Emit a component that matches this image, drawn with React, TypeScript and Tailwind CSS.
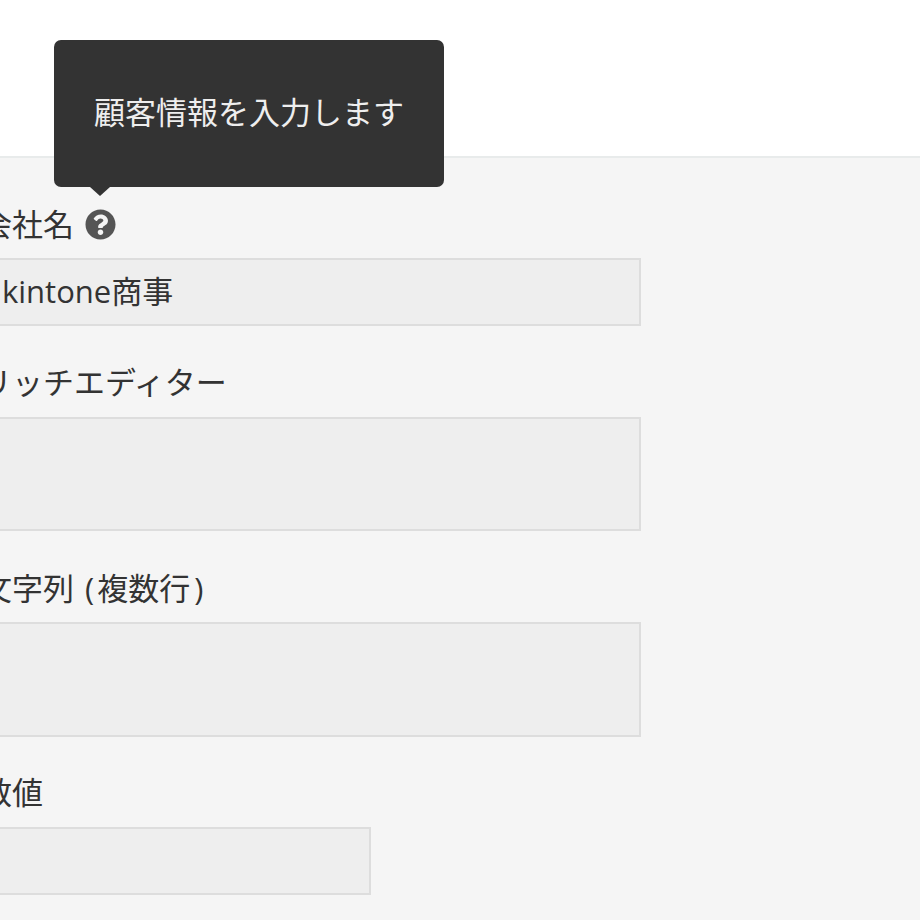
import { FaQuestionCircle } from "react-icons/fa";

const font = "font-['Open_Sans','Noto_Sans_CJK_JP',sans-serif]";

function Label({ children }: { children: React.ReactNode }) {
  return <div className="flex h-[36px] items-center gap-[11px] pb-[2px] text-[31px] leading-[34px] whitespace-nowrap text-[#333333]">{children}</div>;
}

export default function App() {
  return (
    <div className={`relative h-[920px] w-[920px] overflow-hidden bg-white ${font}`}>
      <div className="h-[158px] border-b-2 border-[#e8ebeb]" />
      <div className="h-[762px] bg-[#f5f5f5]">
        <div className="-ml-[19px] flex flex-col pt-[49px]">
          <Label>
            <span>会社名</span>
            <FaQuestionCircle className="h-[31px] w-[31px] text-[#555555]" />
          </Label>
          <div className="mt-[15px] flex h-[68px] w-[660px] items-center border-2 border-[#dddddd] bg-[#eeeeee] pb-[2px] pl-[19px] text-[31px] text-[#333333]">kintone商事</div>
          <div className="mt-[39px]"><Label>リッチエディター</Label></div>
          <div className="mt-[16px] h-[114px] w-[660px] border-2 border-[#dddddd] bg-[#eeeeee]" />
          <div className="mt-[40px]">
            <Label>
              <span>
                文字列 <span className="ml-[3px] mr-[3px]">(</span>複数行<span className="ml-[4px]">)</span>
              </span>
            </Label>
          </div>
          <div className="mt-[15px] h-[115px] w-[660px] border-2 border-[#dddddd] bg-[#eeeeee]" />
          <div className="mt-[38px]"><Label>数値</Label></div>
          <div className="mt-[16px] h-[68px] w-[390px] border-2 border-[#dddddd] bg-[#eeeeee]" />
        </div>
      </div>
      <div className="absolute left-[54px] top-[40px] flex h-[147px] w-[390px] items-center justify-center rounded-[7px] bg-[#333333] pb-[3px] text-[31px] whitespace-nowrap text-[#eeeeee]">
        顧客情報を入力します
        <div className="absolute left-[36px] top-full h-0 w-0 border-x-[10px] border-t-[9px] border-x-transparent border-t-[#333333]" />
      </div>
    </div>
  );
}
